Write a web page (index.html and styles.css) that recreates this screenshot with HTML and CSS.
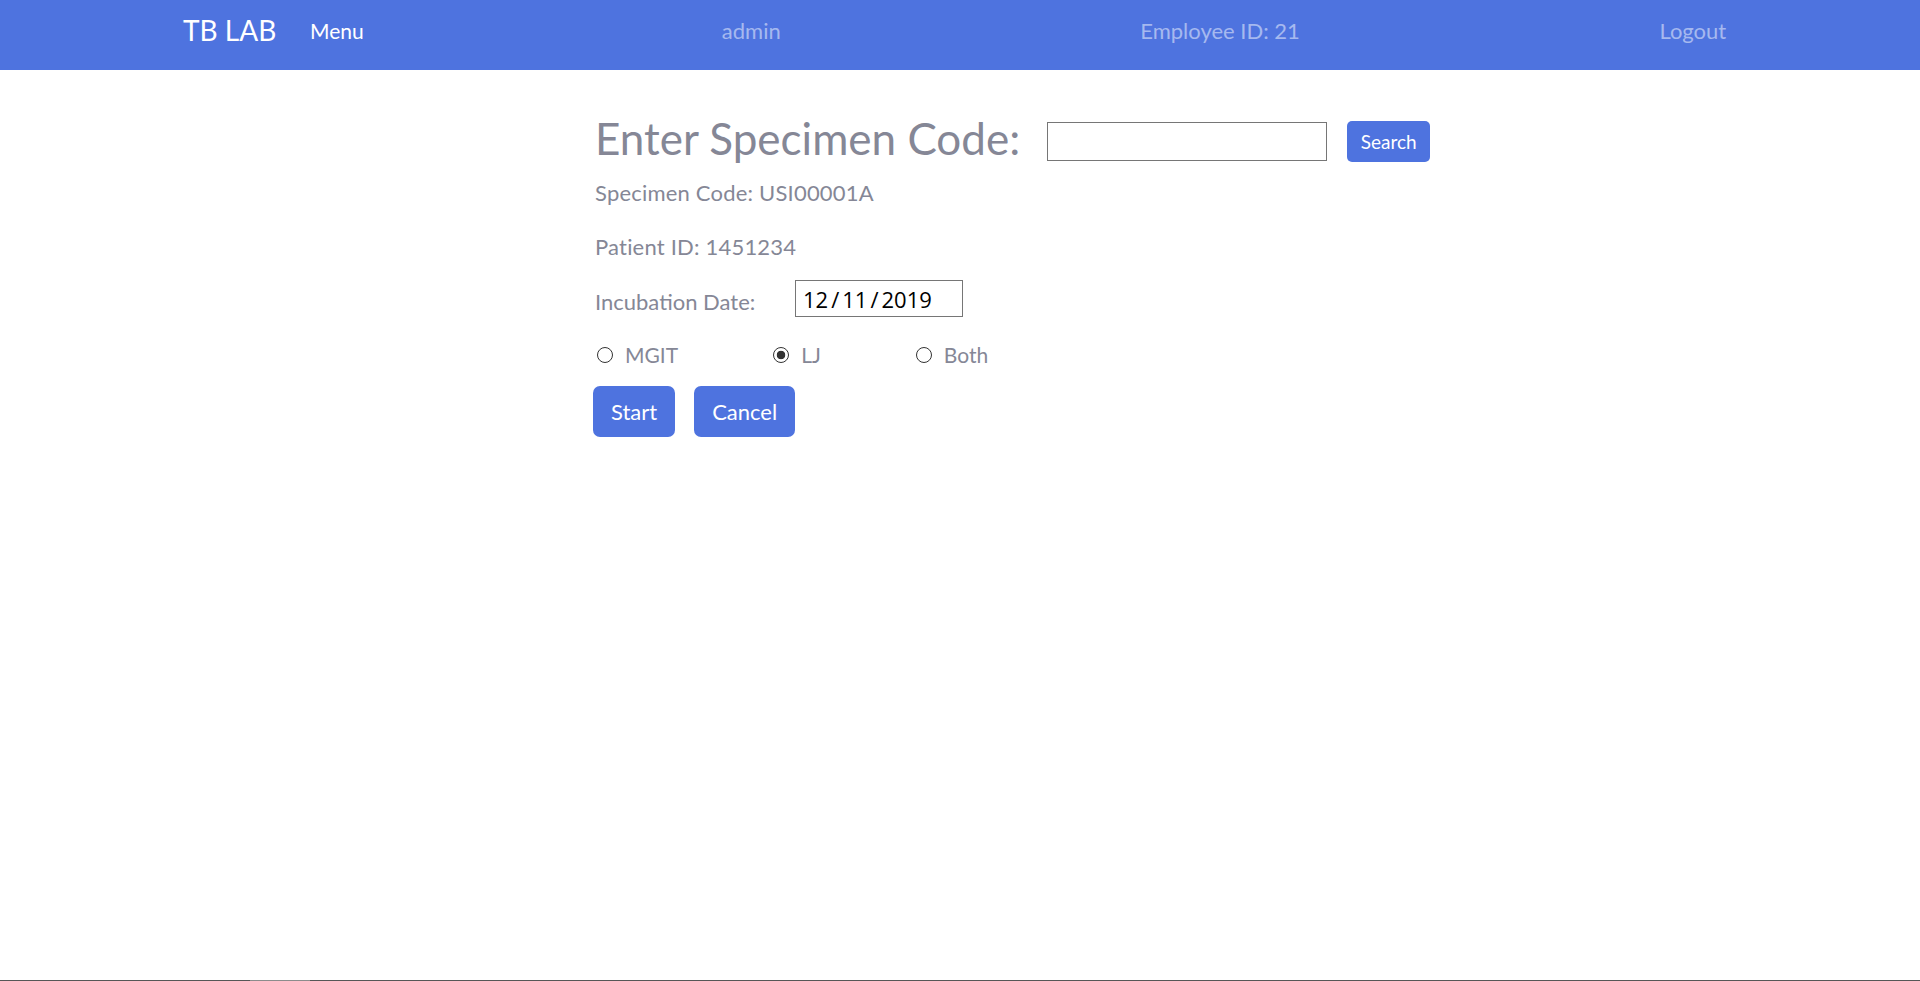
FILE: index.html
```html
<!DOCTYPE html>
<html lang="en">
<head>
<meta charset="utf-8">
<title>TB LAB</title>
<link rel="stylesheet" href="styles.css">
</head>
<body>
<header class="navbar">
  <a class="brand" href="#">TB LAB</a>
  <a class="nav-menu" href="#">Menu</a>
  <ul class="nav-right">
    <li><a href="#">admin</a></li>
    <li><a href="#">Employee ID: 21</a></li>
    <li><a href="#">Logout</a></li>
  </ul>
</header>
<main class="main">
  <div class="search-row">
    <h2 class="title">Enter Specimen Code:</h2>
    <input class="code-input" type="text">
    <button class="btn btn-sm" type="button">Search</button>
  </div>
  <p class="info info-first">Specimen Code: USI00001A</p>
  <p class="info">Patient ID: 1451234</p>
  <div class="date-row">
    <span class="date-label">Incubation Date:</span>
    <div class="date-box"><span>12</span><span class="sep">/</span><span>11</span><span class="sep">/</span><span>2019</span></div>
  </div>
  <div class="radio-row">
    <label class="radio-item"><input type="radio" name="media"><span>MGIT</span></label>
    <label class="radio-item"><input type="radio" name="media" checked><span>LJ</span></label>
    <label class="radio-item"><input type="radio" name="media"><span>Both</span></label>
  </div>
  <div class="btn-row">
    <button class="btn btn-lg" type="button">Start</button>
    <button class="btn btn-lg" type="button">Cancel</button>
  </div>
</main>
<div class="hscroll"><div class="hscroll-thumb"></div></div>
</body>
</html>
```
FILE: styles.css
```css
* { box-sizing: border-box; }

html, body {
  margin: 0;
  padding: 0;
  background: #ffffff;
}

body {
  font-family: Lato, "Open Sans", sans-serif;
  color: #858796;
  height: 981px;
  overflow: hidden;
}

a { text-decoration: none; }

.navbar {
  display: flex;
  align-items: center;
  height: 70px;
  padding: 0 14px 8px 183px;
  background: #4e73df;
}

.brand {
  width: 127px;
  flex: none;
  color: #ffffff;
  font-size: 28px;
  line-height: 1.2;
}

.nav-menu {
  width: 232px;
  flex: none;
  color: #ffffff;
  font-size: 21px;
  line-height: 1.2;
}

.nav-right {
  flex: 1;
  display: flex;
  justify-content: space-around;
  list-style: none;
  margin: 0;
  padding: 0;
}

.nav-right a {
  color: rgba(255, 255, 255, 0.5);
  font-size: 22px;
  line-height: 1.2;
}

.main {
  padding: 51px 0 0 595px;
}

.search-row {
  display: flex;
  align-items: center;
  height: 41px;
}

.title {
  margin: 0;
  padding-bottom: 6px;
  font-size: 44px;
  font-weight: 400;
  line-height: 41px;
  white-space: nowrap;
  color: #858796;
}

.code-input {
  width: 280px;
  height: 39px;
  margin: 0 0 0 27px;
  border: 1px solid #767676;
  background: #fff;
  padding: 0 6px;
  font-size: 18px;
}

.btn {
  border: none;
  background: #4e73df;
  color: #ffffff;
  font-family: Lato, "Open Sans", sans-serif;
  cursor: pointer;
}

.btn-sm {
  margin-left: 20px;
  width: 83px;
  height: 41px;
  padding: 0;
  font-size: 19px;
  border-radius: 5px;
}

.info {
  margin: 24px 0 0;
  font-size: 22px;
  letter-spacing: 0.2px;
  line-height: 30px;
}

.info-first {
  margin-top: 16px;
}

.date-row {
  display: flex;
  align-items: center;
  height: 37px;
  margin-top: 18px;
}

.date-label {
  width: 200px;
  font-size: 22px;
  line-height: 30px;
  padding-top: 7px;
}

.date-box {
  display: flex;
  align-items: center;
  width: 168px;
  height: 37px;
  border: 1px solid #767676;
  padding: 0 0 0 7px;
  color: #000;
  font-family: "Open Sans", "Noto Sans", sans-serif;
  font-size: 22px;
}

.date-box .sep {
  margin: 0 3px;
}

.radio-row {
  display: flex;
  align-items: center;
  height: 30px;
  margin-top: 23px;
  padding-left: 2px;
}

.radio-item {
  display: flex;
  align-items: center;
  gap: 12px;
  margin-right: 95px;
  font-size: 21px;
  line-height: 30px;
}

.radio-item input {
  appearance: none;
  -webkit-appearance: none;
  width: 16px;
  height: 16px;
  margin: 0;
  border: 1px solid #333;
  border-radius: 50%;
  background: #fff;
}

.radio-item input:checked {
  background: radial-gradient(circle, #333 0 4px, #fff 4.6px);
}

.btn-row {
  display: flex;
  gap: 19px;
  margin-top: 16px;
  margin-left: -2px;
}

.btn-lg {
  height: 51px;
  padding: 0 18px;
  font-size: 22px;
  border-radius: 7px;
}

.hscroll {
  position: fixed;
  left: 0;
  right: 0;
  bottom: 0;
  height: 1px;
  background: #565656;
}

.hscroll-thumb {
  width: 60px;
  height: 1px;
  margin-left: 250px;
  background: #8c8c8c;
}
```
